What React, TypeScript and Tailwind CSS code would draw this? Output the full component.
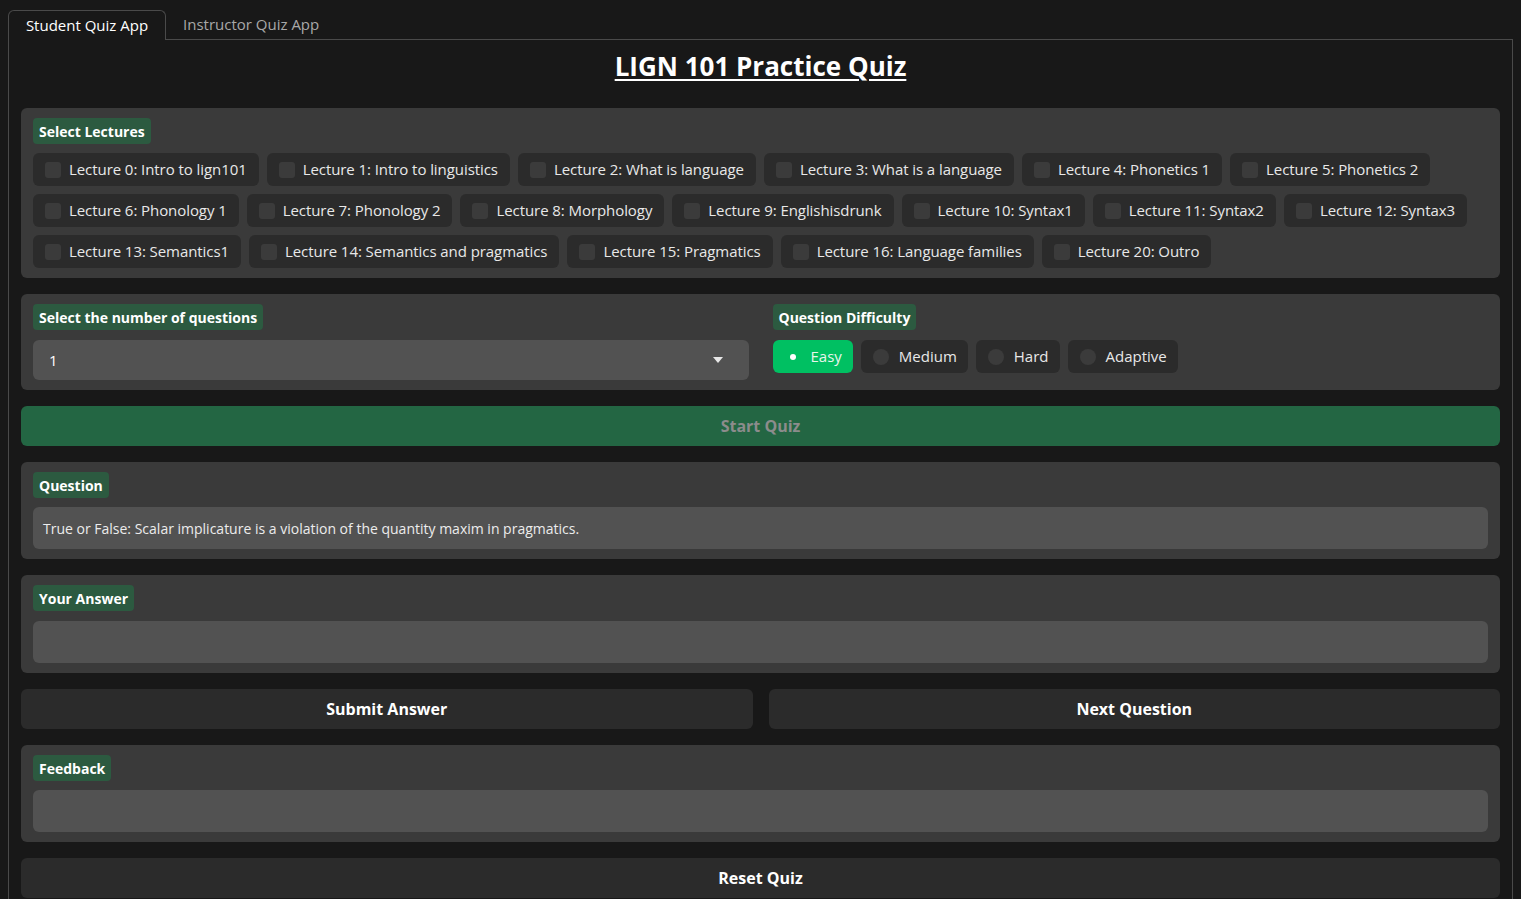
import { useState } from 'react';

const lectures = [
  'Lecture 0: Intro to lign101',
  'Lecture 1: Intro to linguistics',
  'Lecture 2: What is language',
  'Lecture 3: What is a language',
  'Lecture 4: Phonetics 1',
  'Lecture 5: Phonetics 2',
  'Lecture 6: Phonology 1',
  'Lecture 7: Phonology 2',
  'Lecture 8: Morphology',
  'Lecture 9: Englishisdrunk',
  'Lecture 10: Syntax1',
  'Lecture 11: Syntax2',
  'Lecture 12: Syntax3',
  'Lecture 13: Semantics1',
  'Lecture 14: Semantics and pragmatics',
  'Lecture 15: Pragmatics',
  'Lecture 16: Language families',
  'Lecture 20: Outro',
];

const levels = ['Easy', 'Medium', 'Hard', 'Adaptive'];

const Label = ({ text }: { text: string }) => (
  <div className="self-start rounded-[4px] bg-[#2c5a40] px-[6px] h-[26px] flex items-center text-[14px] font-bold text-white">
    {text}
  </div>
);

const App: React.FC = () => {
  const [tab, setTab] = useState(0);
  const [picked, setPicked] = useState<string[]>([]);
  const [level, setLevel] = useState('Easy');

  const toggle = (l: string) =>
    setPicked(p => (p.includes(l) ? p.filter(x => x !== l) : [...p, l]));

  return (
    <div
      className="min-h-[899px] bg-[#181818] text-white px-[8px] pt-[10px]"
      style={{ fontFamily: '"Open Sans", "Noto Sans", sans-serif' }}
    >
      {/* tabs */}
      <div className="flex h-[30px] items-stretch">
        <button
          onClick={() => setTab(0)}
          className={`w-[158px] text-[15px] rounded-t-[6px] ${tab == 0 ? 'border border-b-0 border-[#4a4a4a] text-white bg-[#181818]' : 'text-[#a8a8a8] border-b border-[#4a4a4a]'}`}
        >
          Student Quiz App
        </button>
        <button
          onClick={() => setTab(1)}
          className={`px-[17px] text-[15px] rounded-t-[6px] ${tab == 1 ? 'border border-b-0 border-[#4a4a4a] text-white' : 'text-[#a8a8a8] border-b border-[#4a4a4a]'}`}
        >
          Instructor Quiz App
        </button>
        <div className="flex-1 border-b border-[#4a4a4a]" />
      </div>

      <div className="border-x border-[#4a4a4a] px-[12px] pb-[20px] flex flex-col gap-[16px]">
        <h1 className="text-center text-[26px] font-bold underline underline-offset-[3px] decoration-[2px] pt-[8px] leading-[36px]">
          LIGN 101 Practice Quiz
        </h1>

        {/* lectures */}
        <div className="mt-[8px] bg-[#3a3a3a] rounded-[6px] px-[12px] pt-[10px] pb-[10px] flex flex-col gap-[9px]">
          <Label text="Select Lectures" />
          <div className="flex flex-wrap gap-x-[8px] gap-y-[8px]">
            {lectures.map(l => (
              <label
                key={l}
                onClick={() => toggle(l)}
                className="h-[33px] bg-[#2b2b2b] rounded-[6px] pl-[12px] pr-[12px] flex items-center gap-[8px] text-[15px] tracking-[-0.07px] text-[#e8e8e8] cursor-pointer"
              >
                <span className={`w-[16px] h-[16px] rounded-[3px] ${picked.includes(l) ? 'bg-[#00c062]' : 'bg-[#3b3b3b]'}`} />
                {l}
              </label>
            ))}
          </div>
        </div>

        {/* questions + difficulty */}
        <div className="bg-[#3a3a3a] rounded-[6px] px-[12px] pt-[10px] pb-[10px] grid grid-cols-2 gap-x-[24px]">
          <div className="flex flex-col gap-[10px]">
            <Label text="Select the number of questions" />
            <div className="h-[40px] bg-[#525252] rounded-[6px] px-[16px] flex items-center justify-between text-[15px]">
              <span>1</span>
              <svg width="10" height="6" viewBox="0 0 10 6" className="mr-[10px]">
                <path d="M0 0 L10 0 L5 6 Z" fill="#e8e8e8" />
              </svg>
            </div>
          </div>
          <div className="flex flex-col gap-[10px]">
            <Label text="Question Difficulty" />
            <div className="flex gap-[8px]">
              {levels.map(lv => (
                <label
                  key={lv}
                  onClick={() => setLevel(lv)}
                  className={`h-[33px] rounded-[6px] pl-[12px] pr-[11px] flex items-center gap-[10px] text-[15px] cursor-pointer ${level == lv ? 'bg-[#00c062] text-[#e8f5ec]' : 'bg-[#2b2b2b] text-[#e8e8e8]'}`}
                >
                  <span className={`w-[16px] h-[16px] rounded-full flex items-center justify-center ${level == lv ? 'bg-[#00c062]' : 'bg-[#3b3b3b]'}`}>
                    {level == lv && <span className="w-[6px] h-[6px] rounded-full bg-white" />}
                  </span>
                  {lv}
                </label>
              ))}
            </div>
          </div>
        </div>

        <button className="h-[40px] bg-[#236643] rounded-[6px] text-[16px] font-bold text-[#8c8c8c]">
          Start Quiz
        </button>

        <div className="bg-[#3a3a3a] rounded-[6px] px-[12px] pt-[10px] pb-[10px] flex flex-col gap-[9px]">
          <Label text="Question" />
          <div className="h-[42px] bg-[#525252] rounded-[6px] px-[10px] flex items-center text-[14px] text-[#ececec]">
            True or False: Scalar implicature is a violation of the quantity maxim in pragmatics.
          </div>
        </div>

        <div className="bg-[#3a3a3a] rounded-[6px] px-[12px] pt-[10px] pb-[10px] flex flex-col gap-[10px]">
          <Label text="Your Answer" />
          <input className="h-[42px] bg-[#525252] rounded-[6px] px-[10px] text-[14px] outline-none" />
        </div>

        <div className="grid grid-cols-2 gap-[16px]">
          <button className="h-[40px] bg-[#2b2b2b] rounded-[6px] text-[16px] font-bold">Submit Answer</button>
          <button className="h-[40px] bg-[#2b2b2b] rounded-[6px] text-[16px] font-bold">Next Question</button>
        </div>

        <div className="bg-[#3a3a3a] rounded-[6px] px-[12px] pt-[10px] pb-[10px] flex flex-col gap-[9px]">
          <Label text="Feedback" />
          <div className="h-[42px] bg-[#525252] rounded-[6px]" />
        </div>

        <button className="h-[40px] bg-[#2b2b2b] rounded-[6px] text-[16px] font-bold">Reset Quiz</button>
      </div>
    </div>
  );
};

export default App;
